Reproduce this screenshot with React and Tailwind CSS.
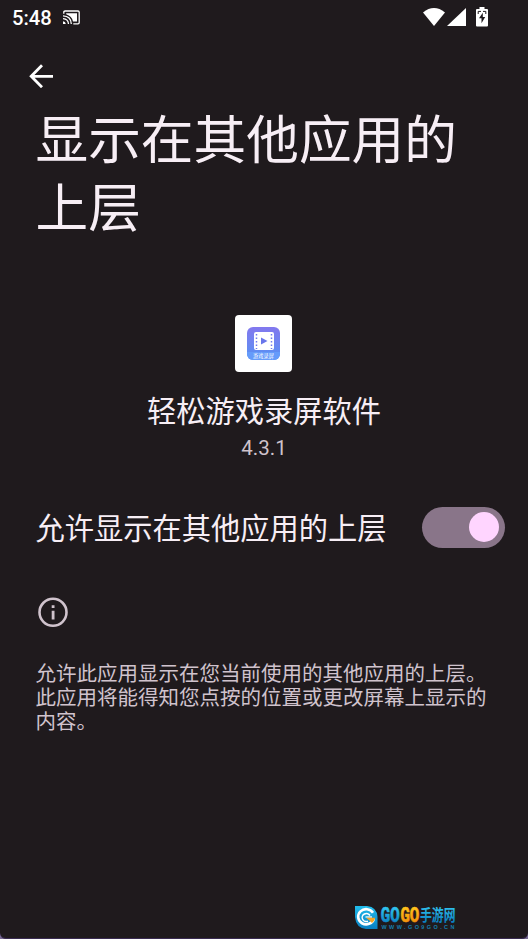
function StatusBar() {
  return (
    <header className="flex h-9 items-center justify-between pl-3 pr-[40px] text-white">
      <div className="flex items-center">
        <span className="w-[40px] whitespace-nowrap font-[Roboto] text-[20.2px] font-medium leading-9">5:48</span>
        <svg className="ml-[11px] mt-[-1px]" width="17" height="15" viewBox="0 0 17 15" fill="none">
          <path d="M.8 3.8V2.3Q.8 1 2.1 1H15Q16.2 1 16.2 2.2V12.6Q16.2 13.8 15 13.8H10.3" stroke="white" strokeWidth="1.3" />
          <path d="M3.2 3.2H14V11.5H10Q9 6.2 3.2 4.3Z" fill="white" />
          <path d="M0 5.8Q8 6 8.3 14M0 8.7Q5.2 9 5.5 14" stroke="white" strokeWidth="1.3" />
          <path d="M0 11.2Q2.5 11.5 2.8 14H0Z" fill="white" />
        </svg>
      </div>
      <div className="mt-[-2px] flex items-center">
        <svg width="22" height="18" viewBox="0 0 22 18">
          <path d="M0 4.4Q11-4.3 22 4.4L11 18Z" fill="white" />
        </svg>
        <svg className="ml-[2px]" width="19" height="18" viewBox="0 0 19 18">
          <path d="M19 0V18H0Z" fill="white" />
        </svg>
        <svg className="ml-[10px]" width="12" height="20" viewBox="0 0 12 20">
          <path d="M3.5 0H8.5V2H11Q12 2 12 3V18.6Q12 19.6 11 19.6H1Q0 19.6 0 18.6V3Q0 2 1 2H3.5Z" fill="white" />
          <path d="M6.8 5.8L3 11.3H5.5V16.3L9.2 10.1H6.8Z" fill="#1f1a1d" />
          <path d="M2.2 7V4.4H5M7 4.4H9.8V7" fill="none" stroke="#1f1a1d" strokeWidth="1" />
        </svg>
      </div>
    </header>
  );
}

function AppIcon() {
  return (
    <div className="mr-px flex h-[57px] w-[57px] items-center justify-center rounded-[4px] bg-white">
      <div className="flex h-[33px] w-[33px] flex-col items-center overflow-hidden rounded-[6px] bg-linear-to-b from-[#8278ee] to-[#4f92f3]">
        <svg className="mt-[5px] shrink-0" width="20" height="18" viewBox="0 0 20 18">
          <rect width="20" height="18" rx="2" fill="white" />
          <path d="M2.5 2V17M17.5 2V17" stroke="#707bed" strokeWidth="1.5" strokeDasharray="1.5 2" />
          <path d="M7 5.5L13.5 9L7 12.5Z" fill="#6976eb" />
        </svg>
        <div className="mt-[2px] flex h-[8px] w-full items-center justify-center bg-[#659bfa]">
          <span className="whitespace-nowrap text-[5.2px] leading-[8px] text-white">游戏录屏</span>
        </div>
      </div>
    </div>
  );
}

function Watermark() {
  return (
    <div className="absolute left-[354px] top-[905px] flex">
      <svg width="24" height="25" viewBox="0 0 24 25">
        <defs>
          <linearGradient id="badge" x1="0" y1="0" x2="0" y2="1">
            <stop stopColor="#22bdec" />
            <stop offset="1" stopColor="#087fc2" />
          </linearGradient>
        </defs>
        <path d="M1 1H13Q23 2 23.5 12V24H12Q2 23 1 12Z" fill="url(#badge)" />
        <path d="M19 7.8A8 7.6 0 1 0 19.8 14" fill="none" stroke="white" strokeWidth="2.6" />
        <path d="M16 10.5A4.2 4 0 1 0 14 16.2" fill="none" stroke="white" strokeWidth="1.5" />
        <path d="M11.5 12H18" stroke="white" strokeWidth="1.3" />
        <path d="M12 12.8H21.2Q20.5 16 18 18L15 15Z" fill="#f6a623" />
      </svg>
      <svg className="ml-[2px] overflow-visible" width="76" height="26" viewBox="0 0 76 26">
        <defs>
          <linearGradient id="blueText" x1="0" y1="0" x2="0" y2="1">
            <stop offset=".2" stopColor="#2fc2ef" />
            <stop offset=".85" stopColor="#087dc0" />
          </linearGradient>
          <linearGradient id="goldText" x1="0" y1="0" x2="0" y2="1">
            <stop offset=".2" stopColor="#ffc21b" />
            <stop offset=".85" stopColor="#f18b09" />
          </linearGradient>
        </defs>
        <text x=".8" y="17.4" textLength="18.8" lengthAdjust="spacingAndGlyphs" className="font-['Roboto'] text-[20.5px] font-black" fill="url(#blueText)" stroke="url(#blueText)" strokeWidth=".6">GO</text>
        <text x="20.5" y="17.4" textLength="18.8" lengthAdjust="spacingAndGlyphs" className="font-['Roboto'] text-[20.5px] font-black" fill="url(#goldText)" stroke="url(#goldText)" strokeWidth=".6">GO</text>
        <text x="40" y="16.3" textLength="35.5" lengthAdjust="spacingAndGlyphs" className="text-[16px] font-bold" fill="url(#blueText)">手游网</text>
        <text x="1.5" y="24" textLength="73" className="font-['Liberation_Sans'] text-[5.5px] font-bold" fill="#157fae">WWW.GO9GO.CN</text>
      </svg>
    </div>
  );
}

export default function App() {
  return (
    <div className="bg-[#776a91]">
      <div className="relative flex h-[939px] w-[528px] flex-col overflow-hidden rounded-b-[6px] border-b border-[#392b51] bg-[#1f1a1d] font-['Noto_Sans_CJK_SC',sans-serif] text-[#f7eef5]">
        <StatusBar />
        <button aria-label="返回" className="ml-[29px] mt-[28px] h-6 w-6 shrink-0">
          <svg width="24" height="24" viewBox="0 0 24 24" fill="none" stroke="white" strokeWidth="2.8">
            <path d="M24 12.3H2.5M13 1.3L2.2 12.3L13 23.2" />
          </svg>
        </button>
        <h1 className="ml-[35.5px] mt-[14px] w-[440px] text-[52.7px] font-normal leading-[68px]">显示在其他应用的<br />上层</h1>
        <section className="mt-[77px] flex flex-col items-center">
          <AppIcon />
          <h2 className="mt-[16px] text-[29.25px] font-normal leading-[42px]">轻松游戏录屏软件</h2>
          <p className="mt-[6px] font-[Roboto] text-[20.5px] leading-6 text-[#cfc3cc]">4.3.1</p>
        </section>
        <label className="mt-[46px] flex h-[42px] items-center justify-between pl-[35.5px] pr-[23px]">
          <span className="mt-[-2px] text-[29.25px] leading-[42px]">允许显示在其他应用的上层</span>
          <span role="switch" aria-checked="true" className="flex h-[41px] w-[83px] items-center justify-end rounded-full bg-[#897589] pr-[6px]">
            <span className="h-[30px] w-[30px] rounded-full bg-[#ffd5ff]" />
          </span>
        </label>
        <section className="ml-[35.5px] mt-[48px] text-[#d0c3cd]">
          <svg width="32" height="32" viewBox="0 0 32 32" fill="none">
            <circle cx="17" cy="16.3" r="13.5" stroke="currentColor" strokeWidth="2.6" />
            <path d="M15.7 9.3H18.5V12.1H15.7ZM15.7 14.8H18.5V23.5H15.7Z" fill="currentColor" />
          </svg>
          <p className="mt-[32px] whitespace-nowrap text-[20.5px] leading-6">允许此应用显示在您当前使用的其他应用的上层。<br />此应用将能得知您点按的位置或更改屏幕上显示的<br />内容。</p>
        </section>
        <Watermark />
      </div>
    </div>
  );
}
